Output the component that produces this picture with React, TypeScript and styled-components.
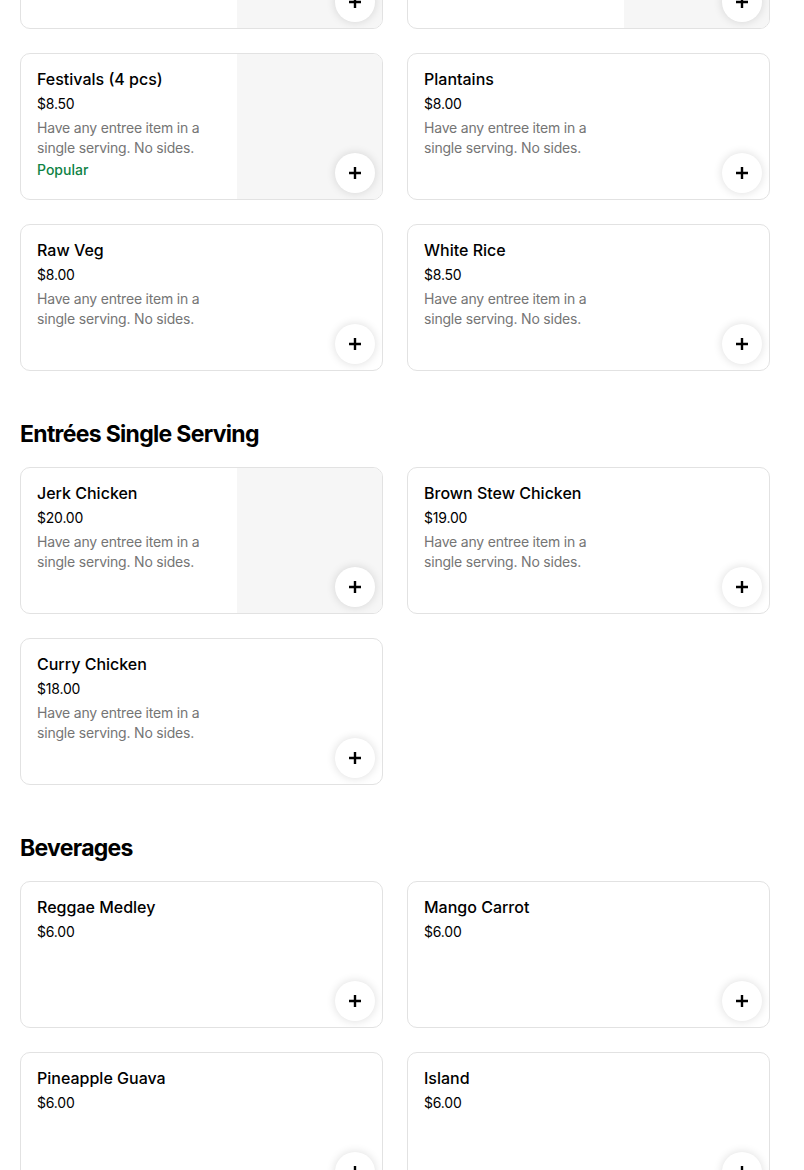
import React from "react";
import styled, { createGlobalStyle } from "styled-components";

type Item = {
  name: string;
  price: string;
  desc?: string;
  popular?: boolean;
  image?: boolean;
  scrolledPast?: boolean;
};

const DESC = "Have any entree item in a single serving. No sides.";

const sides: Item[] = [
  { name: "Rice & Peas", price: "$8.50", desc: DESC, image: true, scrolledPast: true },
  { name: "Mac & Cheese", price: "$8.50", desc: DESC, image: true, scrolledPast: true },
  { name: "Festivals (4 pcs)", price: "$8.50", desc: DESC, popular: true, image: true },
  { name: "Plantains", price: "$8.00", desc: DESC },
  { name: "Raw Veg", price: "$8.00", desc: DESC },
  { name: "White Rice", price: "$8.50", desc: DESC },
];

const entrees: Item[] = [
  { name: "Jerk Chicken", price: "$20.00", desc: DESC, image: true },
  { name: "Brown Stew Chicken", price: "$19.00", desc: DESC },
  { name: "Curry Chicken", price: "$18.00", desc: DESC },
];

const beverages: Item[] = [
  { name: "Reggae Medley", price: "$6.00" },
  { name: "Mango Carrot", price: "$6.00" },
  { name: "Pineapple Guava", price: "$6.00" },
  { name: "Island", price: "$6.00" },
];

function PlusIcon() {
  return (
    <svg width="16" height="16" viewBox="0 0 16 16" aria-hidden>
      <path d="M6.8 2h2.4v4.8H14v2.4H9.2V14H6.8V9.2H2V6.8h4.8z" fill="#000" />
    </svg>
  );
}

function MenuCard({ item }: { item: Item }) {
  return (
    <S.Card>
      <S.Info>
        {/* the page is scrolled: these cards' texts sit above the viewport */}
        {!item.scrolledPast && (
          <>
            <S.Name>{item.name}</S.Name>
            <S.Price>{item.price}</S.Price>
            {item.desc && <S.Desc>{item.desc}</S.Desc>}
            {item.popular && <S.Popular>Popular</S.Popular>}
          </>
        )}
      </S.Info>
      {item.image && <S.Photo />}
      <S.AddButton aria-label={`Add ${item.name}`}>
        <PlusIcon />
      </S.AddButton>
    </S.Card>
  );
}

function Section({ title, items, first }: { title?: string; items: Item[]; first?: boolean }) {
  return (
    <S.Section $first={first}>
      {title && <S.Heading>{title}</S.Heading>}
      <S.Grid>
        {items.map((it) => (
          <MenuCard key={it.name} item={it} />
        ))}
      </S.Grid>
    </S.Section>
  );
}

export default function App() {
  return (
    <>
      <Global />
      <S.Viewport>
        <S.Page>
          <Section items={sides} first />
          <Section title="Entrées Single Serving" items={entrees} />
          <Section title="Beverages" items={beverages} />
        </S.Page>
      </S.Viewport>
    </>
  );
}

const Global = createGlobalStyle`
  html, body {
    margin: 0;
    padding: 0;
    background: #fff;
  }
  body {
    font-family: Inter, "Noto Sans", "Liberation Sans", sans-serif;
    color: #000;
  }
`;

const S = {
  Viewport: styled.div`
    height: 1170px;
    overflow: hidden;
  `,
  Page: styled.main`
    width: 750px;
    padding: 0 34px 0 20px;
  `,
  Section: styled.section<{ $first?: boolean }>`
    margin-top: ${(p) => (p.$first ? "-118px" : "47px")};
  `,
  Heading: styled.h2`
    margin: 0 0 17px;
    font-size: 23px;
    line-height: 32px;
    font-weight: 700;
    letter-spacing: -0.7px;
  `,
  Grid: styled.div`
    display: grid;
    grid-template-columns: 363px 363px;
    column-gap: 24px;
    row-gap: 24px;
  `,
  Card: styled.div`
    position: relative;
    box-sizing: border-box;
    height: 147px;
    display: flex;
    border: 1px solid #e2e2e2;
    border-radius: 10px;
    overflow: hidden;
    background: #fff;
  `,
  Info: styled.div`
    flex: 1;
    padding: 14px 16px 16px;
    min-width: 0;
  `,
  Name: styled.div`
    font-size: 16px;
    line-height: 22px;
    font-weight: 500;
    margin-bottom: 4px;
  `,
  Price: styled.div`
    font-size: 14px;
    line-height: 20px;
    font-weight: 400;
    letter-spacing: -0.2px;
    margin-bottom: 4px;
  `,
  Desc: styled.div`
    max-width: 180px;
    font-size: 14px;
    line-height: 20px;
    letter-spacing: -0.2px;
    color: #757575;
  `,
  Popular: styled.div`
    margin-top: 2px;
    font-size: 14px;
    line-height: 20px;
    font-weight: 500;
    color: #0e8345;
  `,
  Photo: styled.div`
    width: 145px;
    flex: none;
    background: #f6f6f6;
  `,
  AddButton: styled.button`
    position: absolute;
    right: 7px;
    bottom: 6px;
    width: 40px;
    height: 40px;
    border: none;
    border-radius: 50%;
    background: #fff;
    box-shadow: 0 0 10px rgba(0, 0, 0, 0.14);
    display: flex;
    align-items: center;
    justify-content: center;
    padding: 0;
    cursor: pointer;
  `,
};
